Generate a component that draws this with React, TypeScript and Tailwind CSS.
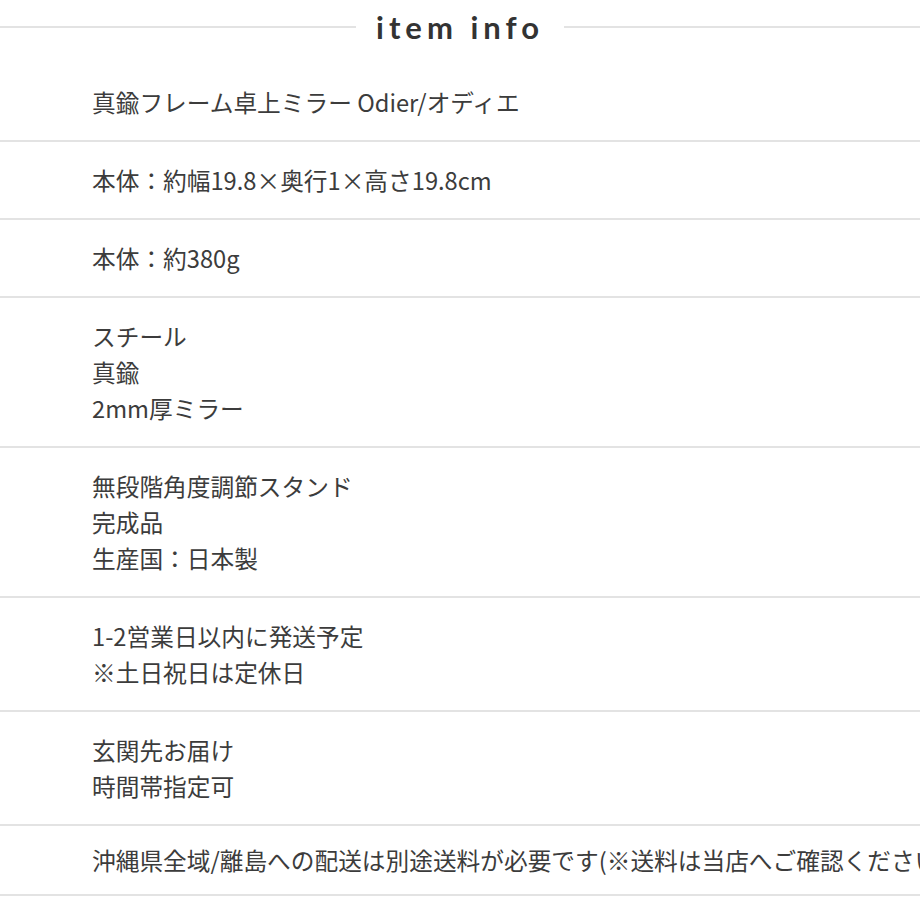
const rows: string[][] = [
  ["真鍮フレーム卓上ミラー Odier/オディエ"],
  ["本体：約幅19.8×奥行1×高さ19.8cm"],
  ["本体：約380g"],
  ["スチール", "真鍮", "2mm厚ミラー"],
  ["無段階角度調節スタンド", "完成品", "生産国：日本製"],
  ["1-2営業日以内に発送予定", "※土日祝日は定休日"],
  ["玄関先お届け", "時間帯指定可"],
];

export default function App() {
  return (
    <div className="w-[920px] h-[920px] overflow-hidden bg-white text-[#3c3c3c] font-['Noto_Sans_CJK_JP',sans-serif]">
      <div className="h-[64px] flex items-start">
        <div className="flex items-center w-full h-[54px]">
          <div className="flex-1 h-[2px] bg-[#e3e3e3]" />
          <h2 className="pl-[20px] pr-[20px] text-[31px] font-bold tracking-[5px] text-[#333] font-['Lato',sans-serif] leading-none">
            item info
          </h2>
          <div className="flex-1 h-[2px] bg-[#e3e3e3]" />
        </div>
      </div>
      {rows.map((lines, i) => (
        <div
          key={i}
          className="pl-[92px] py-[20px] border-b-2 border-[#e3e3e3] text-[23.7px] leading-[36px] whitespace-nowrap"
        >
          {lines.map((l) => (
            <div key={l}>{l}</div>
          ))}
        </div>
      ))}
      <div className="pl-[92px] pt-[17px] pb-[16px] border-b-2 border-[#e3e3e3] text-[23.7px] leading-[35px] whitespace-nowrap">
        沖縄県全域/離島への配送は別途送料が必要です(※送料は当店へご確認ください)
      </div>
    </div>
  );
}
